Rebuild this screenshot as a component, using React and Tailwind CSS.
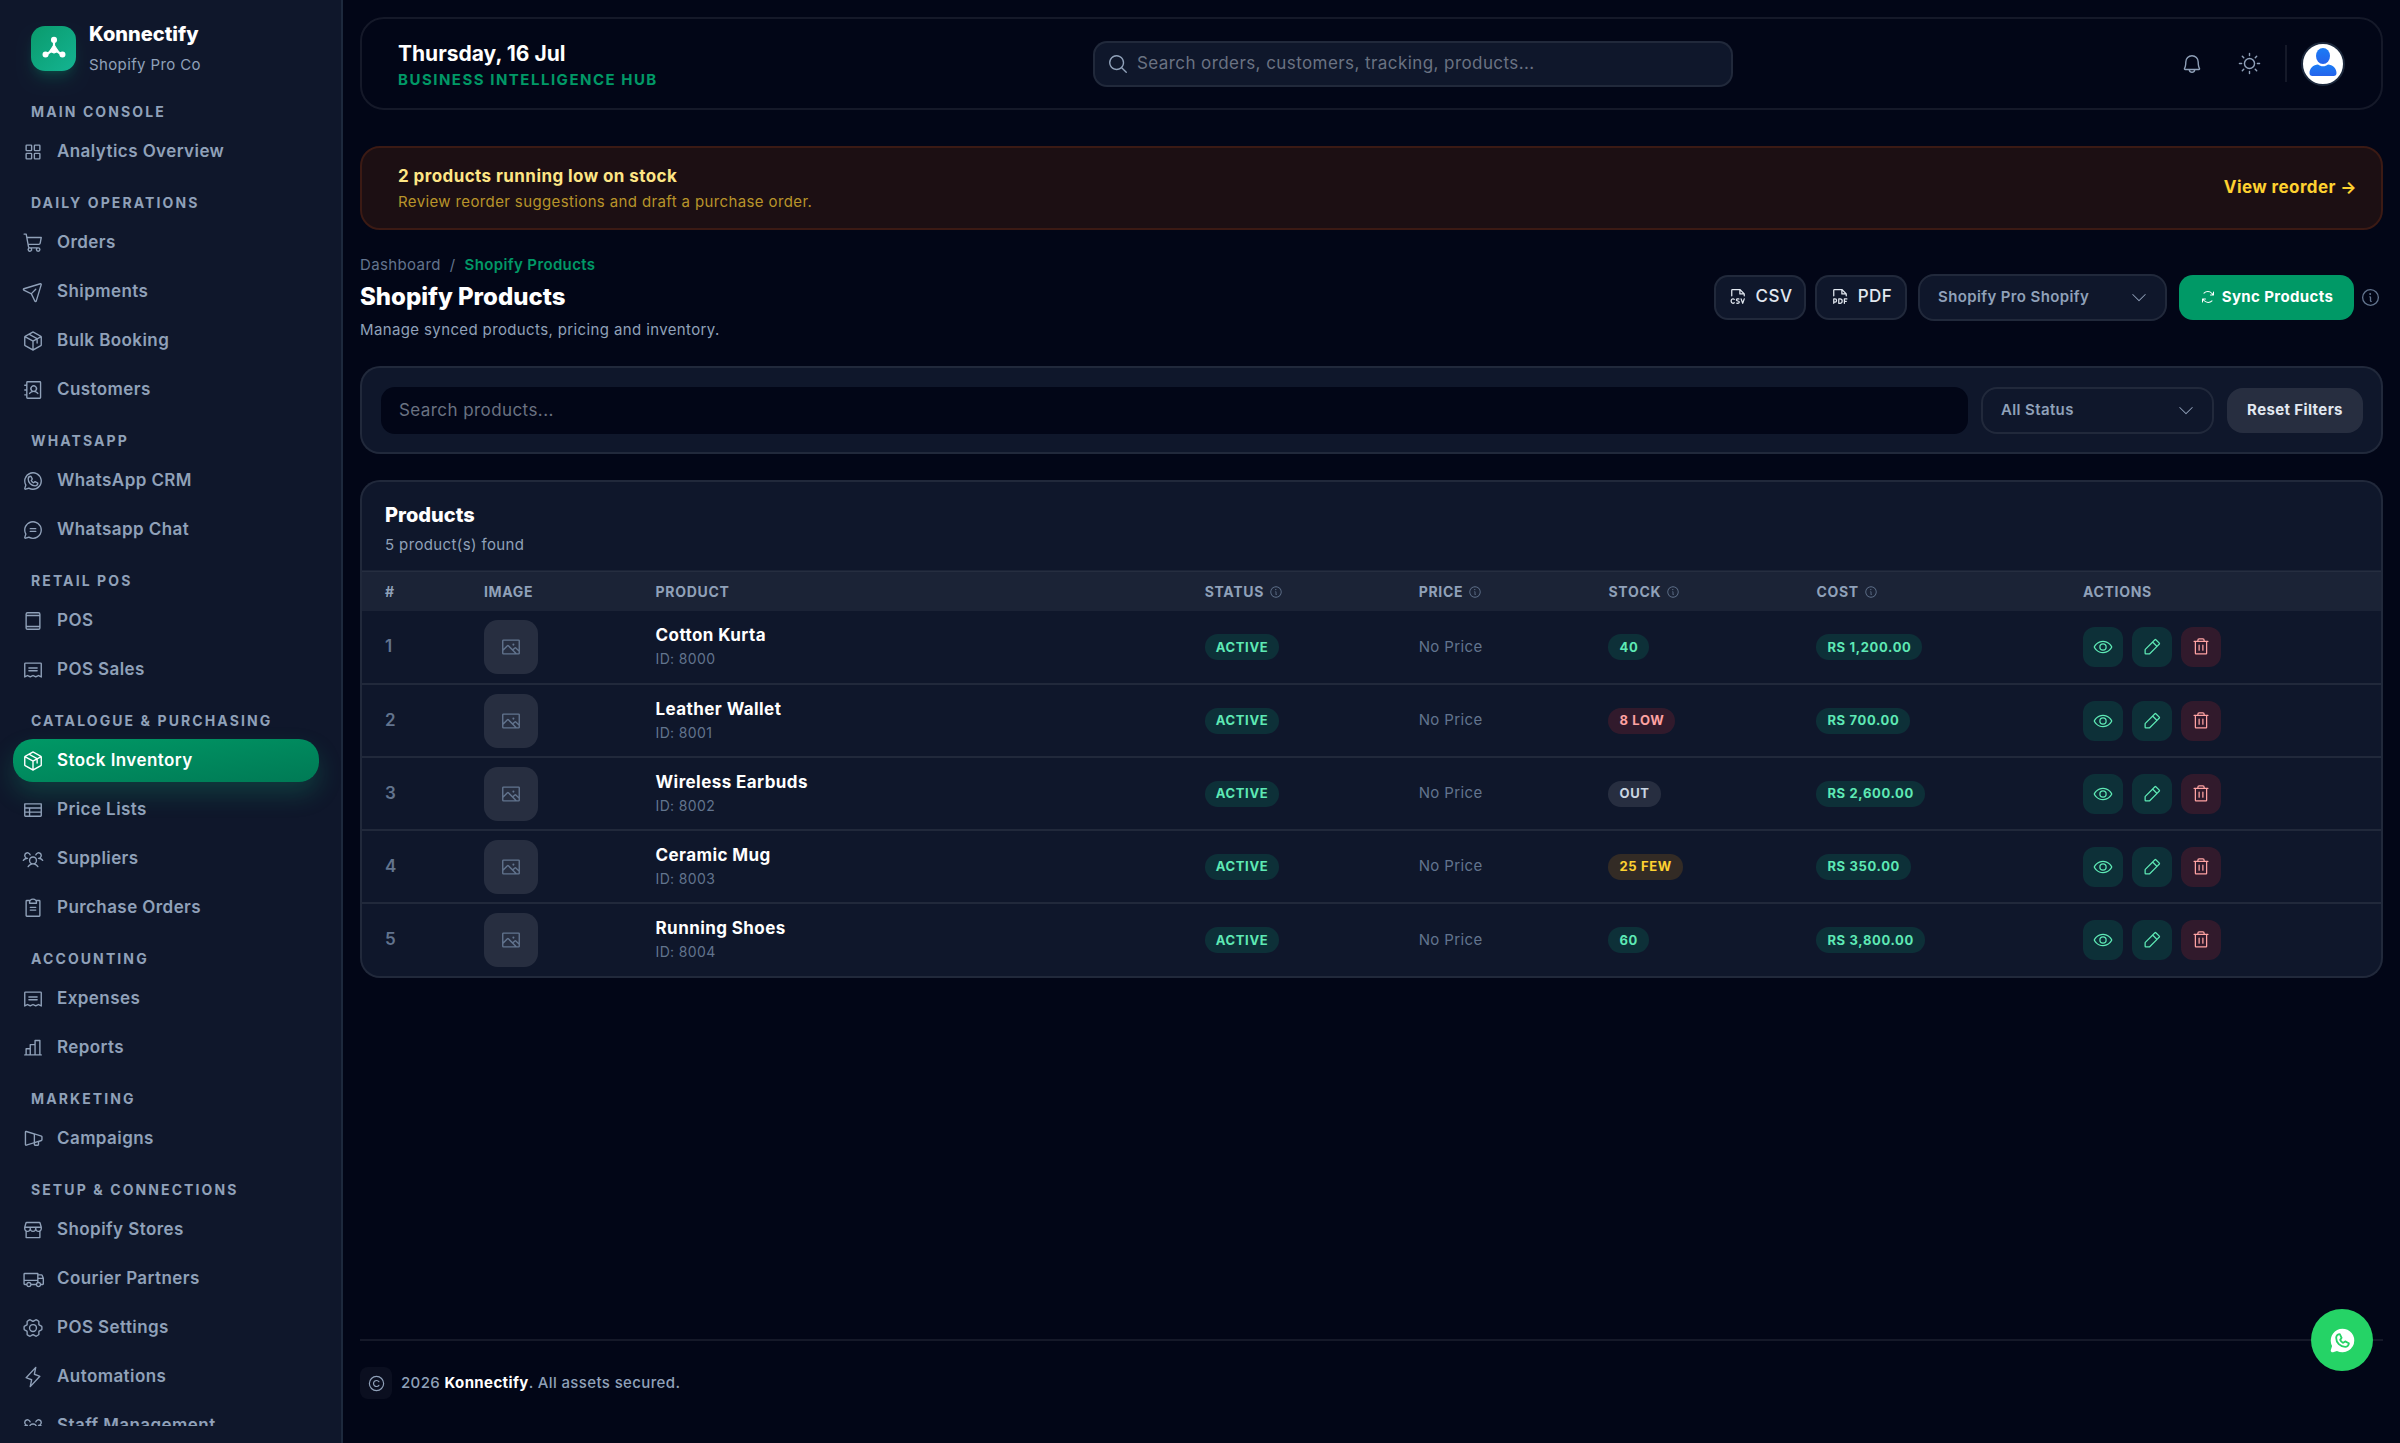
import React, { useState } from 'react';
import {
    PiSquaresFour, PiShoppingCart, PiPaperPlaneTilt, PiPackage, PiAddressBook, PiWhatsappLogo,
    PiChatCircleText, PiDeviceTablet, PiReceipt, PiTable, PiUsersThree, PiClipboardText,
    PiChartBar, PiMegaphoneSimple, PiStorefront, PiTruck, PiGearSix, PiLightning, PiMagnifyingGlass,
    PiBell, PiSun, PiFileCsv, PiFilePdf, PiCaretDownLight, PiArrowsClockwise, PiInfo, PiImage,
    PiEye, PiPencilSimple, PiTrash, PiCopyright, PiWhatsappLogoFill
} from 'react-icons/pi';

const sections = [
    { title: 'Main Console', items: [['Analytics Overview', PiSquaresFour]] },
    {
        title: 'Daily Operations',
        items: [
            ['Orders', PiShoppingCart],
            ['Shipments', PiPaperPlaneTilt],
            ['Bulk Booking', PiPackage],
            ['Customers', PiAddressBook]
        ]
    },
    { title: 'WhatsApp', items: [['WhatsApp CRM', PiWhatsappLogo], ['Whatsapp Chat', PiChatCircleText]] },
    { title: 'Retail POS', items: [['POS', PiDeviceTablet], ['POS Sales', PiReceipt]] },
    {
        title: 'Catalogue & Purchasing',
        items: [
            ['Stock Inventory', PiPackage],
            ['Price Lists', PiTable],
            ['Suppliers', PiUsersThree],
            ['Purchase Orders', PiClipboardText]
        ]
    },
    { title: 'Accounting', items: [['Expenses', PiReceipt], ['Reports', PiChartBar]] },
    { title: 'Marketing', items: [['Campaigns', PiMegaphoneSimple]] },
    {
        title: 'Setup & Connections',
        items: [
            ['Shopify Stores', PiStorefront],
            ['Courier Partners', PiTruck],
            ['POS Settings', PiGearSix],
            ['Automations', PiLightning],
            ['Staff Management', PiUsersThree]
        ]
    }
];

const products = [
    { id: 8000, name: 'Cotton Kurta', stock: '40', level: 'ok', cost: 'Rs 1,200.00' },
    { id: 8001, name: 'Leather Wallet', stock: '8 Low', level: 'low', cost: 'Rs 700.00' },
    { id: 8002, name: 'Wireless Earbuds', stock: 'Out', level: 'out', cost: 'Rs 2,600.00' },
    { id: 8003, name: 'Ceramic Mug', stock: '25 Few', level: 'few', cost: 'Rs 350.00' },
    { id: 8004, name: 'Running Shoes', stock: '60', level: 'ok', cost: 'Rs 3,800.00' }
];

const badgeColors = {
    ok: 'bg-emerald-500/15 text-emerald-300',
    low: 'bg-red-500/15 text-red-300',
    out: 'bg-white/10 text-slate-300',
    few: 'bg-amber-500/15 text-amber-300'
};

function Badge({ level, children }) {
    return (
        <span className={`inline-flex h-[26px] items-center rounded-full px-[11px] text-[13px] font-bold uppercase tracking-wider ${badgeColors[level]}`}>
            {children}
        </span>
    );
}

function Sidebar() {
    return (
        <aside className="sticky top-0 flex h-screen w-[343px] shrink-0 flex-col border-r-2 border-slate-800 bg-slate-900 pb-[17px]">
            <div className="flex items-center gap-[13px] pt-5 pl-[31px]">
                <div className="flex size-[45px] items-center justify-center rounded-[14px] bg-linear-to-br from-[#0a9a6c] to-[#14b492] shadow-lg shadow-emerald-500/20">
                    <svg viewBox="0 0 24 24" className="size-[26px]" fill="#fff" stroke="#fff" strokeWidth="2" strokeLinecap="round">
                        <path d="M12 5v8M12 13l-7 5M12 13l7 5" fill="none" />
                        <path d="M12 9l4 6-4 1.500-4-1.500z" strokeWidth="1" strokeLinejoin="round" />
                        <circle cx="12" cy="4.500" r="1.800" />
                        <circle cx="4.200" cy="18" r="1.800" />
                        <circle cx="19.800" cy="18" r="1.800" />
                    </svg>
                </div>
                <div>
                    <div className="text-[20px] leading-[28px] font-extrabold text-white">Konnectify</div>
                    <div className="mt-[6px] text-[15px] leading-[22px] tracking-wide text-slate-400">Shopify Pro Co</div>
                </div>
            </div>
            <nav className="mt-[6px] min-h-0 flex-1 overflow-y-auto pr-[22px] pl-[13px] [scrollbar-width:none]">
                {sections.map(section => (
                    <div key={section.title}>
                        <h3 className="pt-5 pb-2 pl-[18px] text-[14px] leading-5 font-bold tracking-[0.15em] text-slate-400 uppercase">
                            {section.title}
                        </h3>
                        <div className="flex flex-col gap-[6px]">
                            {section.items.map(([label, Icon]) => (
                                <a
                                    key={label}
                                    href="#"
                                    className={label === 'Stock Inventory'
                                        ? 'flex h-[43px] items-center gap-[13px] rounded-[20px] bg-linear-to-br from-emerald-600 to-emerald-700 pl-[9px] text-[17px] font-semibold tracking-wide text-white shadow-[0_12px_24px_rgba(16,185,129,0.22)]'
                                        : 'flex h-[43px] items-center gap-[13px] rounded-[20px] pl-[9px] text-[17px] font-semibold tracking-wide text-slate-400'}
                                >
                                    <Icon className="size-[22px] shrink-0" />
                                    {label}
                                </a>
                            ))}
                        </div>
                    </div>
                ))}
            </nav>
        </aside>
    );
}

function Header() {
    return (
        <header className="flex h-[93px] items-center justify-between rounded-[24px] border-2 border-white/8 pr-9 pl-9">
            <div className="pt-1">
                <div className="text-[21px] leading-7 font-bold text-white">Thursday, 16 Jul</div>
                <div className="text-[15px] leading-6 font-bold tracking-widest text-emerald-600 uppercase">Business Intelligence Hub</div>
            </div>
            <label className="flex h-[46px] w-[640px] items-center gap-2 rounded-[14px] border-2 border-white/8 bg-slate-900 pl-3">
                <PiMagnifyingGlass className="size-[22px] shrink-0 text-slate-400" />
                <input
                    type="text"
                    aria-label="Search"
                    placeholder="Search orders, customers, tracking, products..."
                    className="w-full bg-transparent text-[17px] tracking-wide text-white outline-none placeholder:text-gray-500"
                />
            </label>
            <div className="flex items-center">
                <button aria-label="Notifications" className="flex size-12 items-center justify-center text-slate-400">
                    <PiBell className="size-[22px]" />
                </button>
                <button aria-label="Theme" className="ml-[10px] flex size-12 items-center justify-center text-slate-400">
                    <PiSun className="size-[23px]" />
                </button>
                <div className="mr-[14px] ml-[11px] h-[37px] w-[2px] bg-white/8" />
                <button aria-label="Profile" className="flex size-11 items-center justify-center overflow-hidden rounded-full border-2 border-slate-800 bg-white">
                    <svg viewBox="0 0 40 40" className="size-10">
                        <defs>
                            <linearGradient id="avatar" x1="0" y1="0" x2="0" y2="1">
                                <stop offset="0" stopColor="#1b7cf5" />
                                <stop offset="1" stopColor="#2563eb" />
                            </linearGradient>
                        </defs>
                        <ellipse cx="20" cy="12" rx="7" ry="8" fill="url(#avatar)" />
                        <path d="M6.500 29c0-5 4-8 8.500-8.500 1.500 1.200 3 1.800 5 1.800s3.500-.6 5-1.800c4.500.5 8.500 3.500 8.500 8.500 0 2-1 3-3 3h-21c-2 0-3-1-3-3z" fill="url(#avatar)" />
                    </svg>
                </button>
            </div>
        </header>
    );
}

function SelectBox({ label, value, className }) {
    return (
        <div className={`relative h-[47px] ${className}`}>
            <select
                aria-label={label}
                className="h-full w-full appearance-none rounded-[16px] border-2 border-white/8 bg-slate-900 pl-[18px] text-[15px] font-semibold tracking-wide text-slate-400 outline-none"
            >
                <option>{value}</option>
            </select>
            <PiCaretDownLight className="pointer-events-none absolute top-1/2 right-[18px] size-5 -translate-y-1/2 text-slate-400" />
        </div>
    );
}

function ProductsTable() {
    const th = 'h-[40px] pl-[23px] text-left text-[14px] font-bold tracking-wider text-slate-400 uppercase';
    const td = 'h-[73px] pl-[23px]';
    const info = <PiInfo className="ml-[5px] inline size-[14px] -translate-y-px text-slate-500" />;

    return (
        <table className="w-full table-fixed border-collapse">
            <thead className="border-t-2 border-white/5 bg-white/5">
                <tr>
                    <th className={`w-[4.9%] ${th}`}>#</th>
                    <th className={`w-[8.5%] ${th}`}>Image</th>
                    <th className={`w-[27.2%] ${th}`}>Product</th>
                    <th className={`w-[10.6%] ${th}`}>Status{info}</th>
                    <th className={`w-[9.4%] ${th}`}>Price{info}</th>
                    <th className={`w-[10.3%] ${th}`}>Stock{info}</th>
                    <th className={`w-[13.2%] ${th}`}>Cost{info}</th>
                    <th className={th}>Actions</th>
                </tr>
            </thead>
            <tbody className="divide-y-2 divide-white/8">
                {products.map((product, index) => (
                    <tr key={product.id}>
                        <td className={`${td} text-[17px] font-semibold text-slate-500`}>{index + 1}</td>
                        <td className={td}>
                            <div className="flex size-[54px] items-center justify-center rounded-[14px] bg-white/10 text-slate-500">
                                <PiImage className="size-[22px]" />
                            </div>
                        </td>
                        <td className={td}>
                            <div className="text-[17px] leading-6 font-bold tracking-wide text-white">{product.name}</div>
                            <div className="text-[14px] leading-6 tracking-wide text-slate-500">ID: {product.id}</div>
                        </td>
                        <td className={td}><Badge level="ok">Active</Badge></td>
                        <td className={`${td} text-[15px] tracking-wide text-slate-500`}>No Price</td>
                        <td className={td}><Badge level={product.level}>{product.stock}</Badge></td>
                        <td className={td}><Badge level="ok">{product.cost}</Badge></td>
                        <td className={td}>
                            <div className="flex gap-[9px]">
                                <button aria-label="View" className="flex size-10 items-center justify-center rounded-[12px] bg-emerald-500/15 text-emerald-300">
                                    <PiEye className="size-5" />
                                </button>
                                <button aria-label="Edit" className="flex size-10 items-center justify-center rounded-[12px] bg-emerald-500/15 text-emerald-300">
                                    <PiPencilSimple className="size-5" />
                                </button>
                                <button aria-label="Delete" className="flex size-10 items-center justify-center rounded-[12px] bg-red-500/15 text-red-300">
                                    <PiTrash className="size-5" />
                                </button>
                            </div>
                        </td>
                    </tr>
                ))}
            </tbody>
        </table>
    );
}

function App() {
    const [search, setSearch] = useState('');
    const exportBtn = 'flex h-[45px] w-[92px] items-center justify-center gap-2 rounded-[14px] border-2 border-white/8 bg-slate-900 text-[17px] font-medium tracking-wide text-slate-200';

    return (
        <div className="flex min-h-screen bg-[#020617] font-[Inter,sans-serif]">
            <Sidebar />
            <main className="flex min-w-0 flex-1 flex-col px-[17px] pt-[17px] pb-11">
                <Header />

                <div className="mt-[36px] flex h-[84px] items-center justify-between rounded-[20px] border-2 border-[#3b1a14] bg-[#1c0f13] pr-6 pl-9">
                    <div className="pt-[2px]">
                        <div className="text-[17px] leading-[25px] font-bold tracking-wide text-amber-200">2 products running low on stock</div>
                        <div className="text-[15px] leading-[25px] tracking-wide text-[#b8942a]">Review reorder suggestions and draft a purchase order.</div>
                    </div>
                    <a href="#" className="text-[17px] font-bold tracking-wide text-amber-300">View reorder →</a>
                </div>

                <div className="mt-[22px] flex items-center justify-between">
                    <div>
                        <div className="flex gap-[9px] text-[15px] leading-[25px] tracking-wide text-slate-500">
                            <a href="#">Dashboard</a>
                            <span>/</span>
                            <span className="font-semibold text-emerald-600">Shopify Products</span>
                        </div>
                        <h1 className="text-[24px] leading-[40px] font-extrabold text-white">Shopify Products</h1>
                        <p className="text-[15px] leading-[25px] tracking-wide text-slate-400">Manage synced products, pricing and inventory.</p>
                    </div>
                    <div className="flex items-center pr-[2px]">
                        <button className={exportBtn}><PiFileCsv className="size-5" />CSV</button>
                        <button className={`ml-[9px] ${exportBtn}`}><PiFilePdf className="size-5" />PDF</button>
                        <SelectBox label="Store" value="Shopify Pro Shopify" className="ml-[11px] w-[249px]" />
                        <button className="ml-[12px] flex h-[45px] w-[175px] items-center justify-center gap-[6px] rounded-[14px] bg-emerald-600 text-[15px] font-bold tracking-wide text-white">
                            <PiArrowsClockwise className="size-4" />
                            Sync Products
                        </button>
                        <PiInfo className="ml-[6px] size-[21px] text-slate-500" />
                    </div>
                </div>

                <div className="mt-[24px] flex h-[88px] items-center rounded-[20px] border-2 border-white/8 bg-slate-900 pr-[18px] pl-[19px]">
                    <input
                        type="text"
                        aria-label="Search products"
                        value={search}
                        onChange={e => setSearch(e.target.value)}
                        placeholder="Search products..."
                        className="h-[47px] flex-1 rounded-[14px] bg-[#020617] pl-[18px] text-[17px] tracking-wide text-white outline-none placeholder:text-gray-500"
                    />
                    <SelectBox label="Status" value="All Status" className="ml-[13px] w-[233px]" />
                    <button className="ml-[13px] h-[45px] w-[136px] rounded-[16px] bg-white/10 text-[15px] font-bold tracking-wide text-slate-200">
                        Reset Filters
                    </button>
                </div>

                <section className="mt-[26px] overflow-hidden rounded-[20px] border-2 border-white/8 bg-slate-900">
                    <div className="h-[88px] pt-[18px] pl-[23px]">
                        <h2 className="text-[20px] leading-[30px] font-extrabold text-white">Products</h2>
                        <p className="text-[15px] leading-[30px] tracking-wide text-slate-400">5 product(s) found</p>
                    </div>
                    <ProductsTable />
                </section>

                <footer className="mt-auto border-t-2 border-white/8 pt-[26px]">
                    <div className="flex items-center gap-[9px] text-[15px] font-medium tracking-wide text-slate-400">
                        <span className="flex size-8 items-center justify-center rounded-[8px] bg-white/4">
                            <PiCopyright className="size-[19px]" />
                        </span>
                        <span>2026 <b className="font-bold text-white">Konnectify</b>. All assets secured.</span>
                    </div>
                </footer>
            </main>

            <a href="#" aria-label="WhatsApp" className="fixed right-[27px] bottom-[72px] flex size-[62px] items-center justify-center rounded-full bg-[#25d366] text-white">
                <PiWhatsappLogoFill className="size-[29px]" />
            </a>
        </div>
    );
}

export default App;
